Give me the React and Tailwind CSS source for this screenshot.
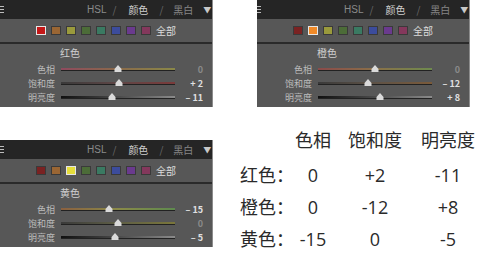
import React from "react";

const SW = ["#7a2222", "#9a6634", "#9a9a3c", "#4c6c38", "#3a7a62", "#3c4c9c", "#6a3a8e", "#84385c"];
const SEL = ["#c41818", "#f08a28", "#e6de3c"];

const HUE_GRAD = [
  "bg-[linear-gradient(90deg,#8e4a5e,#8a6a4a,#8a8848)]",
  "bg-[linear-gradient(90deg,#8a4a4a,#8a7048,#6e8a4e)]",
  "bg-[linear-gradient(90deg,#8a6040,#8a8a48,#5e8a4e)]",
];
const SAT_GRAD = [
  "bg-[linear-gradient(90deg,#3a3a3a,#5e4646,#7a3a3a)]",
  "bg-[linear-gradient(90deg,#3a3a3a,#5e5246,#7a5a3a)]",
  "bg-[linear-gradient(90deg,#3a3a3a,#5e5e46,#7a763a)]",
];
const LUM_GRAD = "bg-[linear-gradient(90deg,#101010,#4a4a4a,#8a8a8a)]";

function Thumb({ v }) {
  const left = 57 + v * 0.57 - 4;
  return (
    <svg
      width="8"
      height="7"
      viewBox="0 0 8 7"
      className="absolute top-[-3px]"
      style={{ left: `${left}px` }}
    >
      <path d="M4 0 L7.5 4 L7.5 7 L0.5 7 L0.5 4 Z" fill="#dadada" />
    </svg>
  );
}

function SliderRow({ label, v, grad }) {
  const txt = v === 0 ? "0" : v > 0 ? `+ ${v}` : `– ${-v}`;
  return (
    <div className="h-[14px] flex items-center">
      <div className="w-[55px] text-right text-[9px] leading-none text-[#bcbcbc]">{label}</div>
      <div className="ml-[6px] w-[114px] h-[3px] relative">
        <div className={`h-[3px] w-full ${grad} border-b border-[#222]`} />
        <Thumb v={v} />
      </div>
      <div
        className={`w-[28px] text-right text-[9px] leading-none font-bold ${
          v === 0 ? "text-[#8a8a8a]" : "text-[#e0e0e0]"
        }`}
      >
        {txt}
      </div>
    </div>
  );
}

function Panel({ idx, label, values }) {
  return (
    <div className="w-[213px] h-[107px] bg-[#575757] flex flex-col border-r border-[#8c8c8c] font-['Noto_Sans_CJK_SC',sans-serif]">
      <div className="h-[19px] bg-[#252525] flex items-center shrink-0">
        <div className="w-[4px] h-[7px] flex flex-col justify-between">
          <div className="h-[1px] bg-[#bdbdbd]" />
          <div className="h-[1px] bg-[#bdbdbd]" />
          <div className="h-[1px] bg-[#bdbdbd]" />
        </div>
        <span className="ml-[83px] text-[10px] leading-none text-[#8a8a8a] font-['Liberation_Sans',sans-serif]">HSL</span>
        <span className="ml-[6px] text-[10px] leading-none text-[#6a6a6a]">/</span>
        <span className="ml-[12px] text-[10px] leading-none text-[#cfcfcf]">颜色</span>
        <span className="ml-[11px] text-[10px] leading-none text-[#6a6a6a]">/</span>
        <span className="ml-[10px] text-[10px] leading-none text-[#858585]">黑白</span>
        <span className="ml-[10px] text-[8px] leading-none text-[#c8c8c8]">▼</span>
      </div>
      <div className="h-[23px] flex items-center pl-[36px] shrink-0">
        {SW.map((c, i) => (
          <div
            key={i}
            className={`w-[10px] h-[9px] mr-[5px] last:mr-[2px] border ${
              i === idx ? "border-[#e6e6e6]" : "border-[#3a3a3a]"
            }`}
            style={{ backgroundColor: i === idx ? SEL[idx] : c }}
          />
        ))}
        <span className="text-[10px] leading-none text-[#dcdcdc]">全部</span>
      </div>
      <div className="h-[2px] bg-[#2a2a2a] shrink-0" />
      <div className="h-[14px] mt-[2px] flex items-center pl-[60px] text-[10px] leading-none text-[#cfcfcf]">{label}</div>
      <div className="mt-[2px] flex flex-col">
        <SliderRow label="色相" v={values[0]} grad={HUE_GRAD[idx]} />
        <SliderRow label="饱和度" v={values[1]} grad={SAT_GRAD[idx]} />
        <SliderRow label="明亮度" v={values[2]} grad={LUM_GRAD} />
      </div>
    </div>
  );
}

function Table() {
  const rows = [
    ["红色：", "0", "+2", "-11"],
    ["橙色：", "0", "-12", "+8"],
    ["黄色：", "-15", "0", "-5"],
  ];
  return (
    <div className="ml-[27px] font-['Open_Sans','Noto_Sans_CJK_SC',sans-serif] text-[18px] leading-none text-[#2a2a2a]">
      <div className="grid grid-cols-[50px_46px_78px_68px] h-[32px] mb-[3px] items-center">
        <div />
        <div className="text-center">色相</div>
        <div className="text-center">饱和度</div>
        <div className="text-center">明亮度</div>
      </div>
      {rows.map((r, i) => (
        <div key={i} className="grid grid-cols-[50px_46px_78px_68px] h-[32px] items-center">
          <div className="whitespace-nowrap">{r[0]}</div>
          <div className="text-center">{r[1]}</div>
          <div className="text-center">{r[2]}</div>
          <div className="text-center">{r[3]}</div>
        </div>
      ))}
    </div>
  );
}

export default function App() {
  return (
    <div className="w-[489px] h-[256px] bg-white overflow-hidden">
      <div className="flex h-[107px]">
        <Panel idx={0} label="红色" values={[0, 2, -11]} />
        <div className="ml-[44px]">
          <Panel idx={1} label="橙色" values={[0, -12, 8]} />
        </div>
      </div>
      <div className="flex mt-[17px] items-start">
        <div className="mt-[16px]">
          <Panel idx={2} label="黄色" values={[-15, 0, -5]} />
        </div>
        <Table />
      </div>
    </div>
  );
}
